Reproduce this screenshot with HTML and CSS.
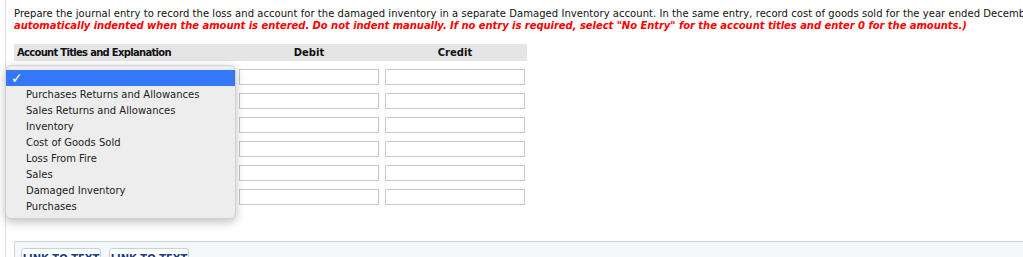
FILE: index.html
```html
<!DOCTYPE html>
<html lang="en">
<head>
    <meta charset="UTF-8">
    <title>Journal Entry</title>
    <link rel="stylesheet" href="styles.css">
</head>
<body>

<div class="page">
    <p class="prompt">
        Prepare the journal entry to record the loss and account for the damaged inventory in a separate Damaged Inventory account. In the same entry, record cost of goods sold for the year ended December 31, 2017.
        <em class="note">automatically indented when the amount is entered. Do not indent manually. If no entry is required, select "No Entry" for the account titles and enter 0 for the amounts.)</em>
    </p>

    <div class="journal">
        <div class="journal-head">
            <div class="col-title">Account Titles and Explanation</div>
            <div class="col-amount">Debit</div>
            <div class="col-amount">Credit</div>
        </div>

        <div class="journal-row">
            <div class="col-title"></div>
            <input type="text" class="amount">
            <input type="text" class="amount">
        </div>
        <div class="journal-row">
            <div class="col-title"></div>
            <input type="text" class="amount">
            <input type="text" class="amount">
        </div>
        <div class="journal-row">
            <div class="col-title"></div>
            <input type="text" class="amount">
            <input type="text" class="amount">
        </div>
        <div class="journal-row">
            <div class="col-title"></div>
            <input type="text" class="amount">
            <input type="text" class="amount">
        </div>
        <div class="journal-row">
            <div class="col-title"></div>
            <input type="text" class="amount">
            <input type="text" class="amount">
        </div>
        <div class="journal-row">
            <div class="col-title"></div>
            <input type="text" class="amount">
            <input type="text" class="amount">
        </div>

        <!-- open account dropdown -->
        <ul class="account-menu">
            <li class="selected"><span class="check">&#10003;</span></li>
            <li>Purchases Returns and Allowances</li>
            <li>Sales Returns and Allowances</li>
            <li>Inventory</li>
            <li>Cost of Goods Sold</li>
            <li>Loss From Fire</li>
            <li>Sales</li>
            <li>Damaged Inventory</li>
            <li>Purchases</li>
        </ul>
    </div>

    <div class="links">
        <button class="link-btn">LINK TO TEXT</button>
        <button class="link-btn">LINK TO TEXT</button>
    </div>
</div>

</body>
</html>
```

FILE: styles.css
```css
body {
    margin: 0;
    font-family: "DejaVu Sans", Verdana, sans-serif;
    font-size: 10px;
    color: #111;
    background: #fff;
    overflow: hidden;
}
.page {
    margin-left: 5px;
    padding-left: 8px;
    border-left: 1px solid #dde2e8;
    min-height: 257px;
}
.prompt {
    margin: 0;
    padding-top: 8px;
    line-height: 12px;
    white-space: nowrap;
    letter-spacing: 0.05px;
}
.note {
    display: block;
    color: #f00;
    font-weight: bold;
    letter-spacing: -0.05px;
}
.journal {
    position: relative;
    width: 513px;
    margin-top: 12px;
}
.journal-head {
    display: flex;
    align-items: center;
    height: 17px;
    background: #e5e5e5;
    font-weight: bold;
}
.journal-head .col-title {
    padding-left: 3px;
    letter-spacing: -0.7px;
}
.col-title {
    flex: none;
    width: 225px;
    box-sizing: border-box;
}
.col-amount {
    flex: none;
    width: 140px;
    text-align: center;
    margin-right: 6px;
}
.journal-row {
    display: flex;
    align-items: center;
    height: 24px;
    padding-top: 4px;
}
.journal-row + .journal-row {
    padding-top: 0;
}
.amount {
    flex: none;
    width: 140px;
    height: 16px;
    box-sizing: border-box;
    margin: 0 6px 0 0;
    border: 1px solid #c8c8c8;
    padding: 0 3px;
    font: inherit;
}
.account-menu {
    position: absolute;
    left: -9px;
    top: 21px;
    width: 231px;
    margin: 0;
    padding: 4px 0;
    list-style: none;
    background: #ededed;
    border: 1px solid #d2d2d2;
    border-radius: 6px;
    box-shadow: 0 3px 10px rgba(0, 0, 0, 0.25);
    box-sizing: border-box;
    color: #222;
    font-size: 10px;
}
.account-menu li {
    height: 16px;
    line-height: 17px;
    padding-left: 20px;
    white-space: nowrap;
}
.account-menu li.selected {
    background: #3478f6;
    color: #fff;
    padding-left: 5px;
}
.check {
    font-size: 14px;
    font-weight: bold;
}
.links {
    margin-top: 32px;
    border-top: 1px solid #cdd3da;
    border-left: 1px solid #cdd3da;
    background: #f4f8fb;
    margin-right: -8px;
    padding: 6px 6px 10px;
    display: flex;
    gap: 8px;
}
.link-btn {
    width: 80px;
    height: 22px;
    padding: 0;
    background: #fff;
    border: 1px solid #c9d1db;
    border-radius: 3px;
    font-family: "DejaVu Sans", Verdana, sans-serif;
    font-size: 10px;
    font-weight: bold;
    color: #1d3d7c;
    line-height: 18px;
    text-align: center;
}
```
